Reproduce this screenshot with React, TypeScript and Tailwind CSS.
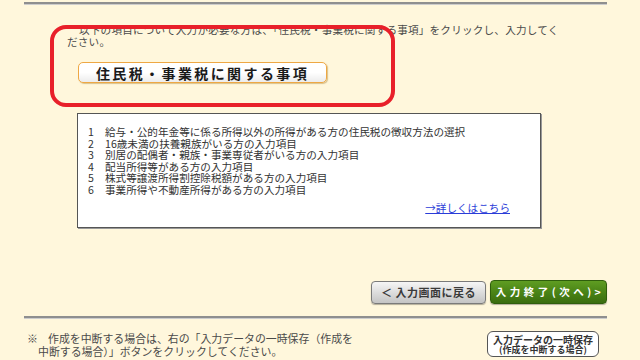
import React from "react";

const items = [
  "給与・公的年金等に係る所得以外の所得がある方の住民税の徴収方法の選択",
  "16歳未満の扶養親族がいる方の入力項目",
  "別居の配偶者・親族・事業専従者がいる方の入力項目",
  "配当所得等がある方の入力項目",
  "株式等譲渡所得割控除税額がある方の入力項目",
  "事業所得や不動産所得がある方の入力項目",
];

export default function App() {
  return (
    <div
      className="relative w-[640px] h-[360px] overflow-hidden bg-[#fff7dc] text-[#333]"
      style={{ fontFamily: '"Noto Sans CJK JP", "Noto Sans", sans-serif' }}
    >
      {/* top rule */}
      <div className="mt-[2px] ml-[24px] w-[583px]">
        <div className="h-[2px] bg-[#8f8f8f]" />
        <div className="h-px bg-[#cdcdcd]" />
      </div>

      <p className="mt-[19px] ml-[67px] w-[520px] text-[10.6px] leading-[12px] tracking-[0.2px] text-[#4a4a4a]">
        <span className="pl-[12px]">以下の項目について入力が必要な方は、「住民税・事業税に関する事項」をクリックし、入力してく</span>
        <br />
        ださい。
      </p>

      <div className="mt-[14px] ml-[78px] w-[249px] h-[21px] rounded-[5px] border-[1.5px] border-[#eea844] bg-gradient-to-b from-white via-white to-[#ececec] shadow-[1px_1px_1px_rgba(180,140,60,0.5)] flex items-center justify-center">
        <span className="text-[14px] font-bold tracking-[2.4px] text-[#1a1a1a] leading-none">
          住民税・事業税に関する事項
        </span>
      </div>

      <div className="mt-[30px] ml-[77px] w-[464px] h-[115px] border border-[#555] bg-white shadow-[1px_1px_0_#999] pt-[12px] pl-[10px] pr-[30px] text-[10.6px] leading-[11.6px] text-[#333]">
        {items.map((t, i) => (
          <div key={i} className="flex">
            <span className="w-[17px]">{i + 1}</span>
            <span>{t}</span>
          </div>
        ))}
        <div className="mt-[6px] flex justify-end">
          <span className="text-[#2a3cd8] underline">→詳しくはこちら</span>
        </div>
      </div>

      <div className="mt-[52px] ml-[24px] w-[583px] flex justify-end items-center gap-[4px]">
        <div className="w-[115px] h-[23px] rounded-[4px] border border-[#7a7a7a] bg-gradient-to-b from-[#f6f6f6] to-[#c4c4c4] flex items-center justify-center shadow-[0_1px_1px_rgba(0,0,0,0.3)]">
          <span className="text-[11px] font-bold text-[#3a3a3a] tracking-[0.5px] leading-none">＜ 入力画面に戻る</span>
        </div>
        <div className="w-[117px] h-[24px] rounded-[4px] border border-[#2f5e0c] bg-gradient-to-b from-[#5f9d22] via-[#4a8416] to-[#3b6d0f] flex items-center justify-center shadow-[0_1px_1px_rgba(0,0,0,0.3)]">
          <span className="text-[10.5px] font-bold text-white tracking-[3.5px] leading-none pl-[3px]">入力終了(次へ)&gt;</span>
        </div>
      </div>

      <div className="mt-[12px] ml-[24px] w-[583px]">
        <div className="h-[2px] bg-[#8f8f8f]" />
        <div className="h-px bg-[#cdcdcd]" />
      </div>

      <div className="mt-[13px] ml-[27px] w-[572px] flex justify-between items-start">
        <div className="text-[10.9px] leading-[13px] text-[#4a4a4a]">
          <div className="flex">
            <span className="w-[21px]">※</span>
            <span>作成を中断する場合は、右の「入力データの一時保存（作成を</span>
          </div>
          <div className="pl-[11px]">中断する場合）」ボタンをクリックしてください。</div>
        </div>
        <div className="-mt-[1px] w-[112px] h-[26px] rounded-[6px] border-[1.5px] border-[#555] bg-white flex flex-col items-center justify-center">
          <span className="text-[10px] font-bold text-[#333] leading-[11px]">入力データの一時保存</span>
          <span className="text-[9px] font-bold text-[#333] leading-[10px]">(作成を中断する場合)</span>
        </div>
      </div>

      {/* red annotation overlay */}
      <div className="absolute left-[50px] top-[25px] w-[345px] h-[82px] rounded-[16px] border-[4px] border-[#e8202a] pointer-events-none" />
    </div>
  );
}
